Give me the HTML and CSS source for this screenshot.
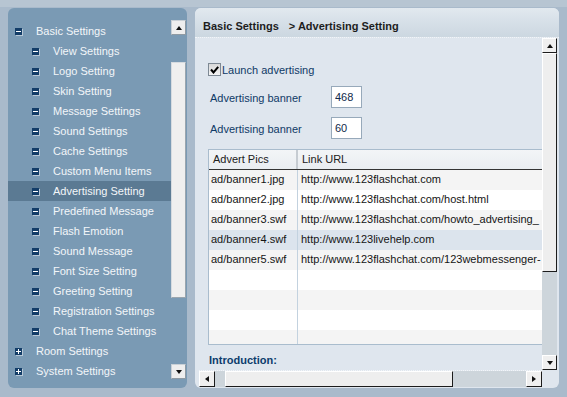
FILE: index.html
```html
<!DOCTYPE html>
<html lang="en">
<head>
    <meta charset="UTF-8">
    <meta name="viewport" content="width=device-width, initial-scale=1.0">
    <title>Advertising Setting</title>
    <link rel="stylesheet" href="styles.css">
</head>
<body>
    <div class="app">
        <div class="sidebar">
            <ul class="tree">
                <li class="tree__item"><span class="toggle"></span>Basic Settings</li>
                <li class="tree__item tree__item--child"><span class="toggle"></span>View Settings</li>
                <li class="tree__item tree__item--child"><span class="toggle"></span>Logo Setting</li>
                <li class="tree__item tree__item--child"><span class="toggle"></span>Skin Setting</li>
                <li class="tree__item tree__item--child"><span class="toggle"></span>Message Settings</li>
                <li class="tree__item tree__item--child"><span class="toggle"></span>Sound Settings</li>
                <li class="tree__item tree__item--child"><span class="toggle"></span>Cache Settings</li>
                <li class="tree__item tree__item--child"><span class="toggle"></span>Custom Menu Items</li>
                <li class="tree__item tree__item--child selected"><span class="toggle"></span>Advertising Setting</li>
                <li class="tree__item tree__item--child"><span class="toggle"></span>Predefined Message</li>
                <li class="tree__item tree__item--child"><span class="toggle"></span>Flash Emotion</li>
                <li class="tree__item tree__item--child"><span class="toggle"></span>Sound Message</li>
                <li class="tree__item tree__item--child"><span class="toggle"></span>Font Size Setting</li>
                <li class="tree__item tree__item--child"><span class="toggle"></span>Greeting Setting</li>
                <li class="tree__item tree__item--child"><span class="toggle"></span>Registration Settings</li>
                <li class="tree__item tree__item--child"><span class="toggle"></span>Chat Theme Settings</li>
                <li class="tree__item"><span class="toggle toggle--plus"></span>Room Settings</li>
                <li class="tree__item"><span class="toggle toggle--plus"></span>System Settings</li>
            </ul>

            <div class="side-scroll">
                <div class="side-scroll__btn side-scroll__btn--up"></div>
                <div class="side-scroll__gap"></div>
                <div class="side-scroll__thumb"></div>
                <div class="side-scroll__rest"></div>
                <div class="side-scroll__btn side-scroll__btn--down"></div>
            </div>
        </div>

        <div class="panel">
            <div class="panel__header">
                <span>Basic Settings</span><span class="crumb-current">&gt; Advertising Setting</span>
            </div>

            <div class="panel__content">
                <div class="panel__main">
                    <div class="view">
                        <div class="check-row">
                            <span class="checkbox">
                                <svg width="9" height="8" viewBox="0 0 9 8"><path d="M1 3.5 L3.5 6.5 L8.2 0.8" stroke="#000" stroke-width="2" fill="none"/></svg>
                            </span>
                            <span class="check-row__label">Launch advertising</span>
                        </div>

                        <div class="field">
                            <span class="field__label">Advertising banner</span>
                            <input class="field__input" type="text" value="468">
                        </div>
                        <div class="field field--second">
                            <span class="field__label">Advertising banner</span>
                            <input class="field__input" type="text" value="60">
                        </div>

                        <div class="grid">
                            <div class="grid__head">
                                <div class="grid__cell grid__cell--pic">Advert Pics</div>
                                <div class="grid__cell">Link URL</div>
                            </div>
                            <div class="grid__row">
                                <div class="grid__cell grid__cell--pic">ad/banner1.jpg</div>
                                <div class="grid__cell">http://www.123flashchat.com</div>
                            </div>
                            <div class="grid__row">
                                <div class="grid__cell grid__cell--pic">ad/banner2.jpg</div>
                                <div class="grid__cell">http://www.123flashchat.com/host.html</div>
                            </div>
                            <div class="grid__row">
                                <div class="grid__cell grid__cell--pic">ad/banner3.swf</div>
                                <div class="grid__cell">http://www.123flashchat.com/howto_advertising_</div>
                            </div>
                            <div class="grid__row grid__row--hover">
                                <div class="grid__cell grid__cell--pic">ad/banner4.swf</div>
                                <div class="grid__cell">http://www.123livehelp.com</div>
                            </div>
                            <div class="grid__row">
                                <div class="grid__cell grid__cell--pic">ad/banner5.swf</div>
                                <div class="grid__cell">http://www.123flashchat.com/123webmessenger-</div>
                            </div>
                            <div class="grid__row"><div class="grid__cell grid__cell--pic"></div><div class="grid__cell"></div></div>
                            <div class="grid__row"><div class="grid__cell grid__cell--pic"></div><div class="grid__cell"></div></div>
                            <div class="grid__row"><div class="grid__cell grid__cell--pic"></div><div class="grid__cell"></div></div>
                            <div class="grid__row"><div class="grid__cell grid__cell--pic"></div><div class="grid__cell"></div></div>
                        </div>

                        <div class="intro">Introduction:</div>
                    </div>

                    <div class="vscroll">
                        <div class="sbtn sbtn--up"></div>
                        <div class="vscroll__thumb"></div>
                        <div class="vscroll__track"></div>
                        <div class="sbtn sbtn--down"></div>
                    </div>
                </div>

                <div class="hscroll">
                    <div class="sbtn sbtn--left"></div>
                    <div class="hscroll__track hscroll__track--start"></div>
                    <div class="hscroll__thumb"></div>
                    <div class="hscroll__track"></div>
                    <div class="sbtn sbtn--right"></div>
                </div>
            </div>
        </div>
    </div>
</body>
</html>
```

FILE: styles.css
```css
* {
    margin: 0;
    padding: 0;
    box-sizing: border-box;
}

body {
    width: 567px;
    height: 397px;
    overflow: hidden;
    background: linear-gradient(#b7c5d2 0, #b7c5d2 7px, #a9bacb 7px);
    font-family: "Liberation Sans", Arial, sans-serif;
    font-size: 11px;
}

.app {
    display: flex;
    gap: 8px;
    padding: 8px 0 0 8px;
}

/* Left tree panel */
.sidebar {
    width: 179px;
    height: 380px;
    display: flex;
    padding: 12px 1px 9px 0;
    background-color: #7a9ab4;
    border-radius: 6px;
    overflow: hidden;
}

.tree {
    flex: 1;
    list-style: none;
    overflow: hidden;
    padding-top: 1px;
}

.tree__item {
    height: 20px;
    display: flex;
    align-items: center;
    padding-left: 7px;
    color: #f3f6f9;
    white-space: nowrap;
}

.tree__item--child {
    padding-left: 24px;
}

.tree__item.selected {
    background-color: #5b7a93;
}

.toggle {
    width: 7px;
    height: 7px;
    margin-right: 14px;
    position: relative;
    flex-shrink: 0;
    background-color: #133d68;
    box-shadow: 1px 1px 0 #b8c8d6;
}

.toggle::before {
    content: '';
    position: absolute;
    left: 1px;
    top: 3px;
    width: 5px;
    height: 1px;
    background: #fff;
}

.toggle--plus::after {
    content: '';
    position: absolute;
    left: 3px;
    top: 1px;
    width: 1px;
    height: 5px;
    background: #fff;
}

.side-scroll {
    width: 15px;
    display: flex;
    flex-direction: column;
}

.side-scroll__btn {
    height: 15px;
    display: flex;
    justify-content: center;
    align-items: center;
    background-color: #eeeeee;
    border: 1px solid #c9d0d6;
    border-right-color: #8f9aa3;
    border-bottom-color: #8f9aa3;
}

.side-scroll__btn::after {
    content: '';
    border-left: 3px solid transparent;
    border-right: 3px solid transparent;
}

.side-scroll__btn--up::after {
    border-bottom: 4px solid #111;
}

.side-scroll__btn--down::after {
    border-top: 4px solid #111;
}

.side-scroll__gap {
    height: 27px;
}

.side-scroll__thumb {
    height: 236px;
    background-color: #efefef;
    border: 1px solid #d6dbe0;
    border-right-color: #9aa5ae;
    border-bottom-color: #9aa5ae;
}

.side-scroll__rest {
    flex: 1;
}

/* Right settings panel */
.panel {
    width: 364px;
    height: 380px;
    display: flex;
    flex-direction: column;
    background-color: #dfe6ee;
    border-radius: 6px;
    overflow: hidden;
}

.panel__header {
    height: 29px;
    padding: 11px 0 0 8px;
    line-height: 14px;
    font-weight: bold;
    color: #1d1d1d;
    white-space: nowrap;
    background: linear-gradient(#e2e9ef, #d8e1e9 40%, #ccd7e0);
}

.crumb-current {
    margin-left: 10px;
}

.panel__content {
    flex: 1;
    display: flex;
    flex-direction: column;
    border-top: 1px dotted #f2f5f8;
}

.panel__main {
    height: 332px;
    display: flex;
}

.view {
    flex: 1;
    overflow: hidden;
    padding: 25px 0 0 13px;
    color: #0f3a66;
}

.check-row {
    height: 13px;
    display: flex;
    align-items: center;
}

.checkbox {
    width: 13px;
    height: 13px;
    display: flex;
    justify-content: center;
    align-items: center;
    margin-right: 1px;
    background: linear-gradient(#d8d8d8, #f4f4f4);
    border: 1px solid #7e8994;
}

.field {
    height: 22px;
    display: flex;
    align-items: center;
    margin-top: 10px;
    padding-left: 2px;
}

.field--second {
    margin-top: 9px;
}

.field__label {
    width: 121px;
    padding-top: 2px;
}

.field__input {
    width: 31px;
    height: 22px;
    padding: 0 3px;
    border: 1px solid #97a9ba;
    background: #fff;
    font: inherit;
    color: #102a4a;
    outline: none;
}

/* Advert list */
.grid {
    width: 420px;
    height: 196px;
    margin-top: 10px;
    overflow: hidden;
    background: #fff;
    border: 1px solid #a9bccd;
    color: #151515;
}

.grid__head {
    height: 20px;
    display: flex;
    background: linear-gradient(#f3f5f7, #e9edf1);
    border-bottom: 1px solid #333;
    color: #202020;
}

.grid__row {
    height: 20px;
    display: flex;
}

.grid__row:nth-child(even) {
    background-color: #f4f4f4;
}

.grid__row.grid__row--hover {
    background-color: #dce4ed;
}

.grid__cell {
    flex: 1;
    line-height: 19px;
    padding-left: 3px;
    white-space: nowrap;
}

.grid__cell--pic {
    flex: none;
    width: 89px;
    padding-left: 2px;
    border-right: 1px solid #c3d2df;
}

.grid__head .grid__cell--pic {
    padding-left: 3px;
    border-right: 2px solid #c6ccd2;
}

.grid__head .grid__cell {
    padding-left: 4px;
}

.intro {
    margin-top: 8px;
    padding-left: 1px;
    line-height: 14px;
    font-weight: bold;
    color: #0c3c6c;
}

/* Scrollbars */
.sbtn {
    width: 15px;
    height: 15px;
    display: flex;
    justify-content: center;
    align-items: center;
    flex-shrink: 0;
    background-color: #efefef;
    border: 1px solid #fff;
    border-right-color: #1c1c1c;
    border-bottom-color: #1c1c1c;
}

.sbtn::after {
    content: '';
}

.sbtn--up::after,
.sbtn--down::after {
    border-left: 3px solid transparent;
    border-right: 3px solid transparent;
}

.sbtn--up::after { border-bottom: 4px solid #111; }
.sbtn--down::after { border-top: 4px solid #111; }

.sbtn--left::after,
.sbtn--right::after {
    border-top: 3px solid transparent;
    border-bottom: 3px solid transparent;
}

.sbtn--left::after { border-right: 4px solid #111; }
.sbtn--right::after { border-left: 4px solid #111; }

.vscroll {
    width: 15px;
    margin: 0 2px 0 0;
    display: flex;
    flex-direction: column;
}

.vscroll__thumb {
    height: 219px;
    background-color: #eeeeee;
    border: 1px solid #fff;
    border-right-color: #1c1c1c;
    border-bottom-color: #1c1c1c;
}

.vscroll__track {
    flex: 1;
    background-color: #cdd5db;
}

.hscroll {
    height: 17px;
    display: flex;
    margin: 0 17px 0 4px;
    border-top: 1px dotted #f2f5f8;
}

.hscroll .sbtn {
    width: 16px;
    height: 16px;
}

.hscroll__track {
    flex: 1;
    background-color: #cdd5db;
}

.hscroll__track--start {
    flex: none;
    width: 10px;
}

.hscroll__thumb {
    width: 228px;
    background-color: #eeeeee;
    border: 1px solid #fff;
    border-right-color: #1c1c1c;
    border-bottom-color: #1c1c1c;
}
```
